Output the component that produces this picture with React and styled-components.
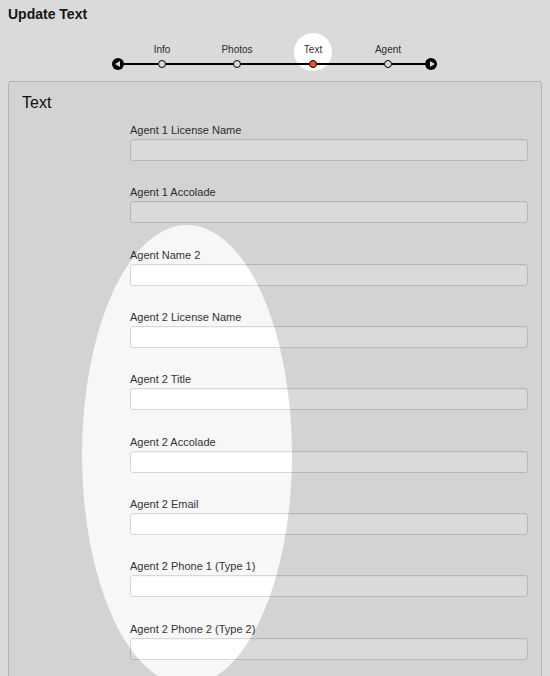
import React from "react";
import styled, { createGlobalStyle } from "styled-components";

const GlobalStyle = createGlobalStyle`
  html, body {
    margin: 0;
    padding: 0;
    background: #ffffff;
    font-family: "Liberation Sans", Arial, sans-serif;
    color: #333;
  }
`;

const fields = [
  "Agent 1 License Name",
  "Agent 1 Accolade",
  "Agent Name 2",
  "Agent 2 License Name",
  "Agent 2 Title",
  "Agent 2 Accolade",
  "Agent 2 Email",
  "Agent 2 Phone 1 (Type 1)",
  "Agent 2 Phone 2 (Type 2)",
];

const steps = [
  { label: "Info", gap: 34 },
  { label: "Photos", gap: 67 },
  { label: "Text", gap: 68, active: true },
  { label: "Agent", gap: 67 },
];

function App() {
  return (
    <>
      <GlobalStyle />
      <Page>
        <Title>Update Text</Title>
        <Stepper>
          <Arrow $dir="left" />
          {steps.map((s) => (
            <React.Fragment key={s.label}>
              <Segment $w={s.gap} />
              <Step>
                <StepLabel>{s.label}</StepLabel>
                <Dot $active={s.active} />
              </Step>
            </React.Fragment>
          ))}
          <Segment $w={33} />
          <Arrow $dir="right" />
        </Stepper>
        <Panel>
          <PanelTitle>Text</PanelTitle>
          <Form>
            {fields.map((f) => (
              <Field key={f}>
                <Label>{f}</Label>
                <Input type="text" />
              </Field>
            ))}
          </Form>
        </Panel>
      </Page>
      <Spotlight width="550" height="676" viewBox="0 0 550 676">
        <path
          fillRule="evenodd"
          fill="rgba(0,0,0,0.145)"
          d="M0 0H550V676H0Z M82 455a105 230 0 1 0 210 0a105 230 0 1 0 -210 0Z M294 52a19 19 0 1 0 38 0a19 19 0 1 0 -38 0Z"
        />
      </Spotlight>
    </>
  );
}

const Page = styled.div`
  padding: 0 8px;
  height: 676px;
  overflow: hidden;
`;

const Title = styled.h1`
  margin: 0;
  padding-top: 6px;
  font-size: 14px;
  line-height: 16px;
  font-weight: bold;
  color: #1a1a1a;
`;

const Stepper = styled.div`
  display: flex;
  align-items: flex-end;
  margin: 20px 0 0 104px;
  height: 28px;
`;

const Arrow = styled.span`
  position: relative;
  flex: none;
  width: 12px;
  height: 12px;
  border-radius: 50%;
  background: #000;
  &::after {
    content: "";
    position: absolute;
    top: 3px;
    ${(p) => (p.$dir === "left" ? "left: 3px;" : "left: 5px;")}
    border-top: 3px solid transparent;
    border-bottom: 3px solid transparent;
    ${(p) =>
      p.$dir === "left"
        ? "border-right: 5px solid #fff;"
        : "border-left: 5px solid #fff;"}
  }
`;

const Segment = styled.span`
  flex: none;
  width: ${(p) => p.$w}px;
  height: 2px;
  background: #000;
  margin-bottom: 5px;
`;

const Step = styled.div`
  flex: none;
  width: 8px;
  display: flex;
  flex-direction: column;
  align-items: center;
  margin-bottom: 2px;
`;

const StepLabel = styled.span`
  font-size: 10px;
  line-height: 12px;
  color: #333;
  white-space: nowrap;
  margin-bottom: 4px;
`;

const Dot = styled.span`
  box-sizing: border-box;
  width: 8px;
  height: 8px;
  border-radius: 50%;
  border: 1.5px solid #000;
  background: ${(p) => (p.$active ? "#f05a1c" : "#fff")};
`;

const Panel = styled.section`
  margin-top: 11px;
  border: 1px solid #d2d2d2;
  border-radius: 3px;
  background: #f7f7f7;
  padding: 11px 13px 20px 13px;
  height: 700px;
`;

const PanelTitle = styled.h2`
  margin: 0;
  font-size: 16px;
  line-height: 20px;
  font-weight: normal;
  color: #111;
`;

const Form = styled.div`
  margin: 0 0 0 108px;
  padding-top: 10px;
  display: flex;
  flex-direction: column;
  gap: 24.35px;
`;

const Field = styled.div`
  display: flex;
  flex-direction: column;
`;

const Label = styled.label`
  font-size: 11px;
  line-height: 14px;
  color: #333;
  margin-bottom: 2px;
`;

const Input = styled.input`
  box-sizing: border-box;
  height: 22px;
  width: 100%;
  border: 1px solid #d8d8d8;
  border-radius: 3px;
  background: #fff;
  box-shadow: inset 0 1px 1px rgba(0, 0, 0, 0.04);
  outline: none;
`;

const Spotlight = styled.svg`
  position: fixed;
  top: 0;
  left: 0;
  pointer-events: none;
`;

export default App;
